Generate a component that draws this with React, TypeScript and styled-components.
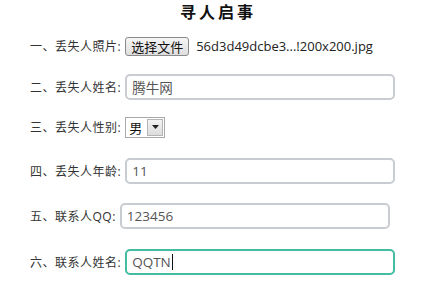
import styled, { createGlobalStyle } from 'styled-components';

const GlobalStyle = createGlobalStyle`
    body {
        margin: 0;
        background: #ffffff;
        font-family: "Open Sans", "Noto Sans CJK SC", sans-serif;
        color: #333333;
    }
`;

const Page = styled.div`
    width: 434px;
    height: 289px;
    overflow: hidden;
`;

const Title = styled.h1`
    margin: 0;
    padding-left: 2px;
    height: 22px;
    line-height: 22px;
    font-family: "Noto Sans CJK SC", serif;
    font-size: 16px;
    font-weight: 700;
    letter-spacing: 3px;
    text-align: center;
    color: #111111;
`;

const Form = styled.div`
    display: flex;
    flex-direction: column;
    padding-left: 30px;
`;

const Row = styled.div<{ $top: number }>`
    display: flex;
    align-items: center;
    height: 26px;
    margin-top: ${(p) => p.$top}px;
`;

const Label = styled.span`
    font-family: "Open Sans", "Noto Sans CJK SC", sans-serif;
    font-size: 12px;
    letter-spacing: 0.5px;
    color: #333333;
    white-space: nowrap;
    margin-right: 4px;
`;

const FileButton = styled.button`
    height: 19px;
    padding: 0 5px;
    font-family: "Noto Sans CJK SC", sans-serif;
    font-size: 13px;
    line-height: 17px;
    color: #111111;
    border: 1px solid #8a8a8a;
    border-radius: 3px;
    background: linear-gradient(#f6f6f6, #dedede);
`;

const FileName = styled.span`
    margin-left: 7px;
    font-size: 13px;
    color: #222222;
`;

const Field = styled.div<{ $active?: boolean }>`
    display: flex;
    align-items: center;
    box-sizing: border-box;
    width: 270px;
    height: 26px;
    padding-left: 5px;
    border: 2px solid ${(p) => (p.$active ? '#44bba3' : '#c9ccd0')};
    border-radius: 5px;
    font-family: "Open Sans", "Noto Sans CJK SC", sans-serif;
    font-size: 13.5px;
    color: #555555;
`;

const Caret = styled.span`
    width: 1px;
    height: 16px;
    margin-left: 1px;
    background: #111111;
`;

const Select = styled.div`
    display: flex;
    align-items: stretch;
    height: 19px;
    border: 1px solid #a9a9a9;
    font-family: "Noto Sans CJK SC", sans-serif;
    font-size: 13px;
    color: #111111;
    background: #ffffff;
`;

const SelectValue = styled.span`
    padding: 0 4px 0 3px;
    line-height: 19px;
`;

const SelectArrow = styled.span`
    display: flex;
    align-items: center;
    justify-content: center;
    width: 14px;
    margin: 1px;
    border: 1px solid #b5b5b5;
    background: linear-gradient(#f4f4f4, #dcdcdc);
`;

function App() {
    return (
        <Page>
            <GlobalStyle />
            <Title>寻人启事</Title>
            <Form>
                <Row $top={11}>
                    <Label>一、丢失人照片:</Label>
                    <FileButton>选择文件</FileButton>
                    <FileName>56d3d49dcbe3...!200x200.jpg</FileName>
                </Row>

                <Row $top={15}>
                    <Label>二、丢失人姓名:</Label>
                    <Field>腾牛网</Field>
                </Row>

                <Row $top={14}>
                    <Label>三、丢失人性别:</Label>
                    <Select>
                        <SelectValue>男</SelectValue>
                        <SelectArrow>
                            <svg width="7" height="4" viewBox="0 0 7 4">
                                <path d="M0 0 H7 L3.5 4 Z" fill="#222" />
                            </svg>
                        </SelectArrow>
                    </Select>
                </Row>

                <Row $top={18}>
                    <Label>四、丢失人年龄:</Label>
                    <Field>11</Field>
                </Row>

                <Row $top={19}>
                    <Label>五、联系人QQ:</Label>
                    <Field>123456</Field>
                </Row>

                <Row $top={20}>
                    <Label>六、联系人姓名:</Label>
                    <Field $active>
                        QQTN
                        <Caret />
                    </Field>
                </Row>
            </Form>
        </Page>
    );
}

export default App;
